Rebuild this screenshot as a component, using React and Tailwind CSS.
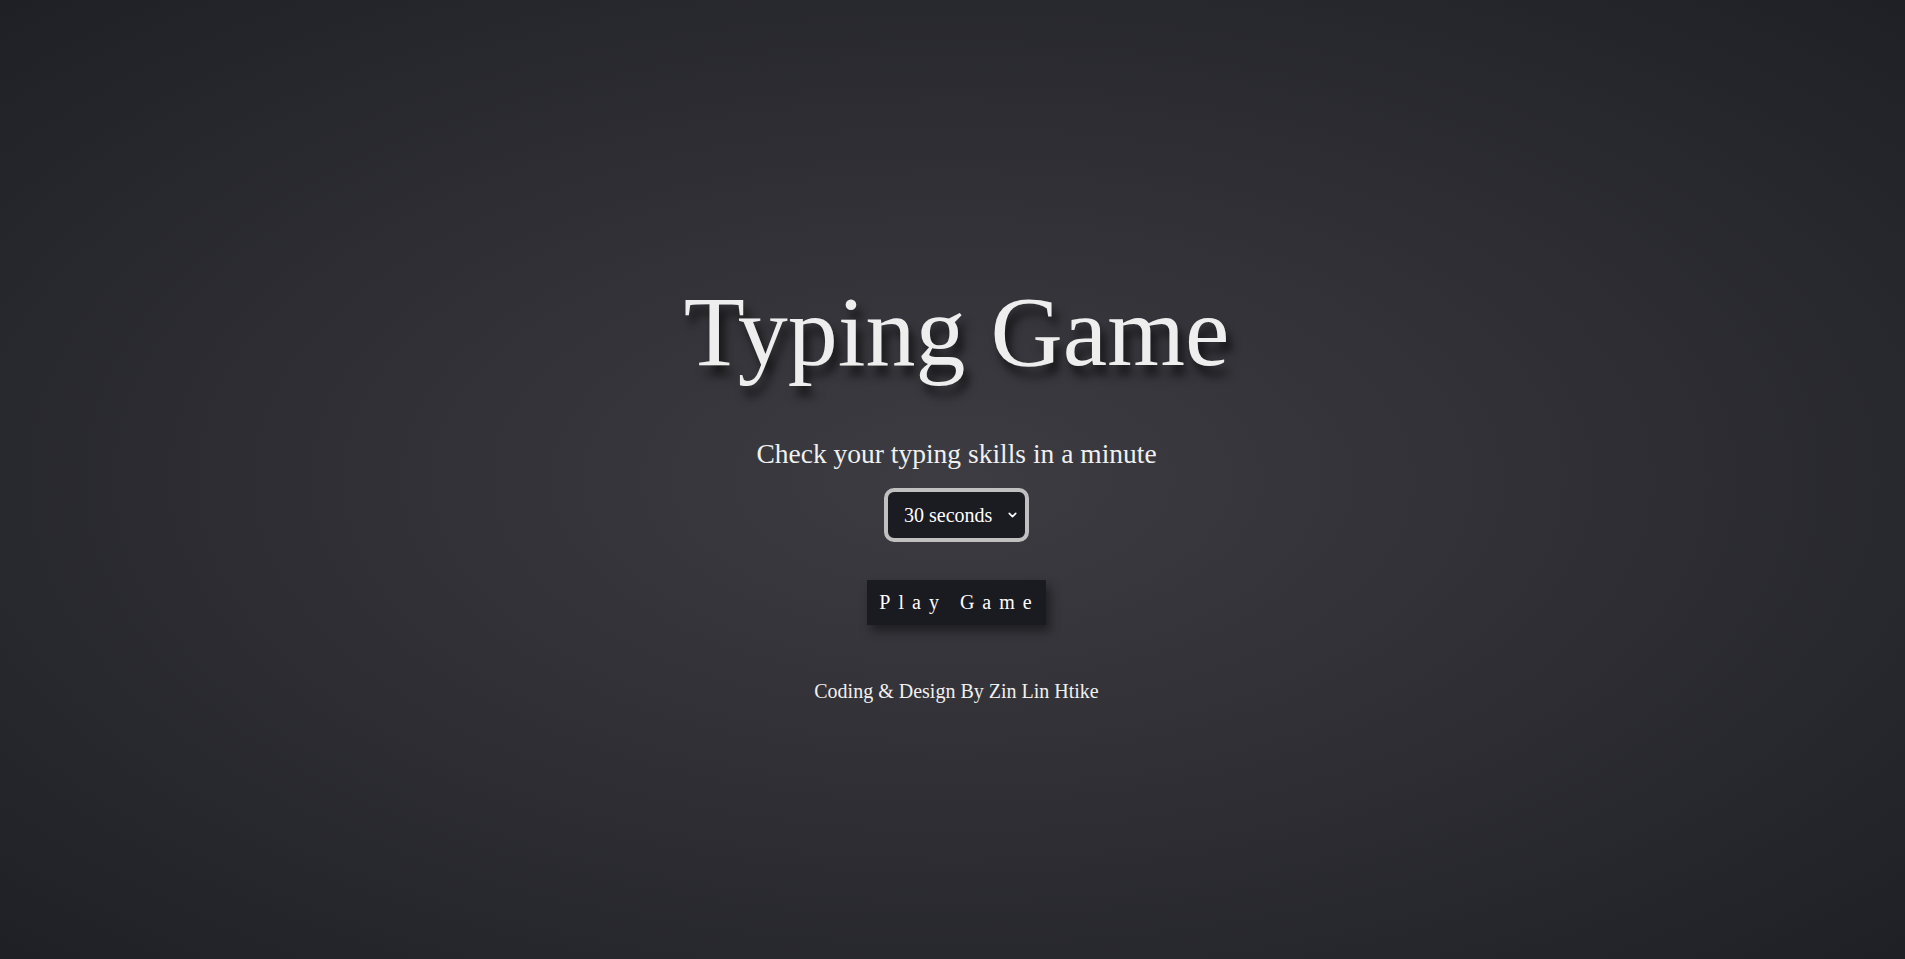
import { ChevronDown } from 'lucide-react';

const DURATIONS = [
  { value: '30', label: '30 seconds' },
  { value: '60', label: '60 seconds' },
  { value: '90', label: '90 seconds' },
];

function App() {
  return (
    <div className="min-h-screen w-full bg-[radial-gradient(ellipse_at_center,#3d3c42_0%,#1f2025_100%)] font-['Liberation_Serif','Times_New_Roman',serif] text-[#f0f0f0] flex flex-col items-center pt-[282px] pl-[8px]">
      <h1 className="text-[100px] leading-none font-normal text-[#eeeeee] [text-shadow:5px_10px_10px_rgba(0,0,0,0.65)]">
        Typing Game
      </h1>
      <p className="mt-[58px] text-[27.5px] leading-none">Check your typing skills in a minute</p>
      <div className="relative mt-[20px]">
        <select
          defaultValue="30"
          className="appearance-none w-[145px] h-[54px] pl-[16px] pr-[28px] bg-[#1b1b22] text-white text-[20px] border-4 border-[#c0c0c0] rounded-[10px] outline-none font-['Liberation_Serif','Times_New_Roman',serif]"
        >
          {DURATIONS.map((item) => (
            <option key={item.value} value={item.value}>
              {item.label}
            </option>
          ))}
        </select>
        <ChevronDown
          size={13}
          strokeWidth={3}
          className="pointer-events-none absolute right-[10px] top-1/2 -translate-y-1/2 text-white"
        />
      </div>
      <button
        type="button"
        className="mt-[38px] h-[45px] pl-[12px] pr-[6px] bg-[#1a1a21] text-white text-[20px] leading-none tracking-[0.4em] shadow-[4px_6px_10px_rgba(0,0,0,0.45)]"
      >
        Play Game
      </button>
      <p className="mt-[56px] text-[20px] leading-none">Coding &amp; Design By Zin Lin Htike</p>
    </div>
  );
}

export default App;
